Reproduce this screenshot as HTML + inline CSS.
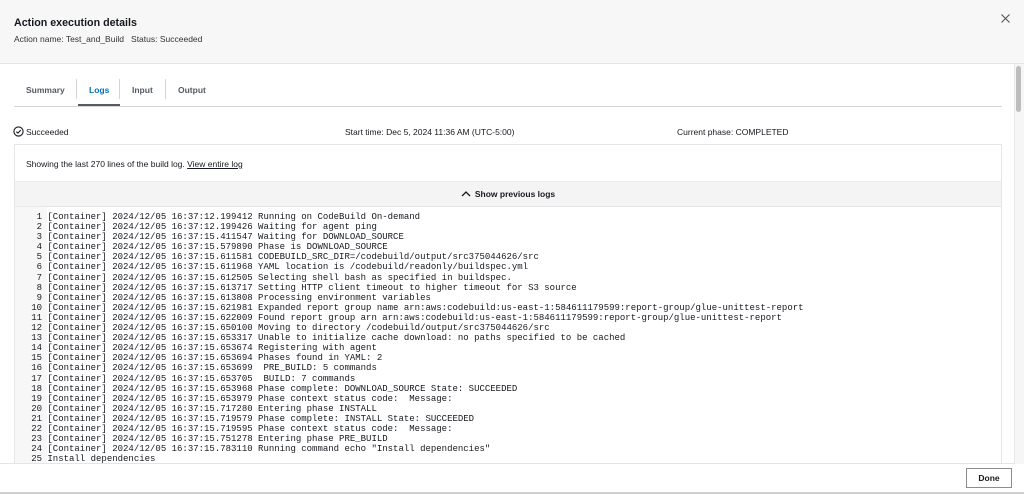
<!DOCTYPE html>
<html><head><meta charset="utf-8"><style>
*{margin:0;padding:0;box-sizing:border-box}
body{width:1024px;height:494px;overflow:hidden;background:#fff;font-family:"Liberation Sans",sans-serif;color:#16191f;position:relative}
.hdr{position:absolute;left:0;top:0;width:1024px;height:64px;background:#f7f7f7;border-bottom:1px solid #e4e4e4}
.t{position:absolute;left:14px;top:17px;font-size:10.7px;font-weight:bold}
.sub{position:absolute;left:14px;top:34px;font-size:8.5px;color:#333}
.x{position:absolute;left:1001px;top:14px;width:9px;height:9px}
.sb{position:absolute;left:1014px;top:64px;width:10px;height:400px;background:#f6f6f6;border-left:1px solid #e8e8e8}
.thumb{position:absolute;left:1016px;top:66px;width:5px;height:46px;background:#bdbdbd;border-radius:3px}
.tabs{position:absolute;left:14px;top:77px;width:988px;height:30px;border-bottom:1px solid #d5d5d5;font-size:8.5px;font-weight:bold;color:#545b64}
.tab{position:absolute;top:8px}
.sep{position:absolute;top:2px;width:1px;height:20px;background:#d5d5d5}
.act{position:absolute;left:64px;top:27px;width:42px;height:2px;background:#545b64}
.st{position:absolute;top:127px;font-size:8.5px;color:#16191f}
.box{position:absolute;left:14px;top:144px;width:988px;height:320px;border:1px solid #e6e6e6;border-bottom:none;background:#fff}
.show{position:absolute;left:11px;top:14px;font-size:8.5px}
.show u{text-decoration:underline}
.prev{position:absolute;left:0;top:36px;width:986px;height:26px;background:#f4f4f4;border-top:1px solid #ececec;border-bottom:1px solid #e6e6e6;text-align:center;font-size:8.5px;font-weight:bold;line-height:24px;color:#16191f}
.log{position:absolute;left:0;top:67px;width:986px;font-family:"Liberation Mono",monospace;font-size:9px;line-height:10.1px;white-space:pre;color:#16191f}
.gut{position:absolute;left:0;top:62px;width:32px;height:260px;background:#f7f7f7}
.ft{position:absolute;left:0;top:463px;width:1014px;height:31px;border-top:1px solid #e4e4e4;background:#fff}
.done{position:absolute;left:966px;top:468px;width:46px;height:20px;border:1px solid #8c8c8c;font-size:8.5px;font-weight:bold;text-align:center;line-height:18px;color:#16191f;background:#fff}
.bot{position:absolute;left:0;top:492px;width:1024px;height:2px;background:#cfcfcf}
</style></head><body>
<div class="hdr">
<div class="t">Action execution details</div>
<div class="sub">Action name: Test_and_Build &nbsp;&nbsp;Status: Succeeded</div>
<svg class="x" viewBox="0 0 9 9"><path d="M0.5 0.5L8.5 8.5M8.5 0.5L0.5 8.5" stroke="#545b64" stroke-width="1.2"/></svg>
</div>
<div class="sb"></div><div class="thumb"></div>
<div class="tabs">
<span class="tab" style="left:12px">Summary</span>
<div class="sep" style="left:62px"></div>
<span class="tab" style="left:75px;color:#0073bb">Logs</span>
<div class="sep" style="left:105px"></div>
<span class="tab" style="left:118px">Input</span>
<div class="sep" style="left:151px"></div>
<span class="tab" style="left:164px">Output</span>
<div class="act"></div>
</div>
<svg style="position:absolute;left:13px;top:126px" width="11" height="11" viewBox="0 0 11 11"><circle cx="5.5" cy="5.5" r="4.6" fill="none" stroke="#16191f" stroke-width="1.1"/><path d="M3.3 5.6L4.9 7.1L7.7 4.1" fill="none" stroke="#16191f" stroke-width="1.1"/></svg>
<div class="st" style="left:26px">Succeeded</div>
<div class="st" style="left:345px">Start time: Dec 5, 2024 11:36 AM (UTC-5:00)</div>
<div class="st" style="left:677px">Current phase: COMPLETED</div>
<div class="box">
<div class="show">Showing the last 270 lines of the build log. <u>View entire log</u></div>
<div class="prev"><svg width="10" height="7" viewBox="0 0 10 7" style="margin-right:4px"><path d="M1 6L5 2L9 6" fill="none" stroke="#16191f" stroke-width="1.3"/></svg>Show previous logs</div>
<div class="gut"></div>
<div class="log">    1 [Container] 2024/12/05 16:37:12.199412 Running on CodeBuild On-demand
    2 [Container] 2024/12/05 16:37:12.199426 Waiting for agent ping
    3 [Container] 2024/12/05 16:37:15.411547 Waiting for DOWNLOAD_SOURCE
    4 [Container] 2024/12/05 16:37:15.579890 Phase is DOWNLOAD_SOURCE
    5 [Container] 2024/12/05 16:37:15.611581 CODEBUILD_SRC_DIR=/codebuild/output/src375044626/src
    6 [Container] 2024/12/05 16:37:15.611968 YAML location is /codebuild/readonly/buildspec.yml
    7 [Container] 2024/12/05 16:37:15.612505 Selecting shell bash as specified in buildspec.
    8 [Container] 2024/12/05 16:37:15.613717 Setting HTTP client timeout to higher timeout for S3 source
    9 [Container] 2024/12/05 16:37:15.613808 Processing environment variables
   10 [Container] 2024/12/05 16:37:15.621981 Expanded report group name arn:aws:codebuild:us-east-1:584611179599:report-group/glue-unittest-report
   11 [Container] 2024/12/05 16:37:15.622009 Found report group arn arn:aws:codebuild:us-east-1:584611179599:report-group/glue-unittest-report
   12 [Container] 2024/12/05 16:37:15.650100 Moving to directory /codebuild/output/src375044626/src
   13 [Container] 2024/12/05 16:37:15.653317 Unable to initialize cache download: no paths specified to be cached
   14 [Container] 2024/12/05 16:37:15.653674 Registering with agent
   15 [Container] 2024/12/05 16:37:15.653694 Phases found in YAML: 2
   16 [Container] 2024/12/05 16:37:15.653699  PRE_BUILD: 5 commands
   17 [Container] 2024/12/05 16:37:15.653705  BUILD: 7 commands
   18 [Container] 2024/12/05 16:37:15.653968 Phase complete: DOWNLOAD_SOURCE State: SUCCEEDED
   19 [Container] 2024/12/05 16:37:15.653979 Phase context status code:  Message:
   20 [Container] 2024/12/05 16:37:15.717280 Entering phase INSTALL
   21 [Container] 2024/12/05 16:37:15.719579 Phase complete: INSTALL State: SUCCEEDED
   22 [Container] 2024/12/05 16:37:15.719595 Phase context status code:  Message:
   23 [Container] 2024/12/05 16:37:15.751278 Entering phase PRE_BUILD
   24 [Container] 2024/12/05 16:37:15.783110 Running command echo "Install dependencies"
   25 Install dependencies</div>
</div>
<div class="ft"></div>
<div class="done">Done</div>
<div class="bot"></div>
</body></html>
